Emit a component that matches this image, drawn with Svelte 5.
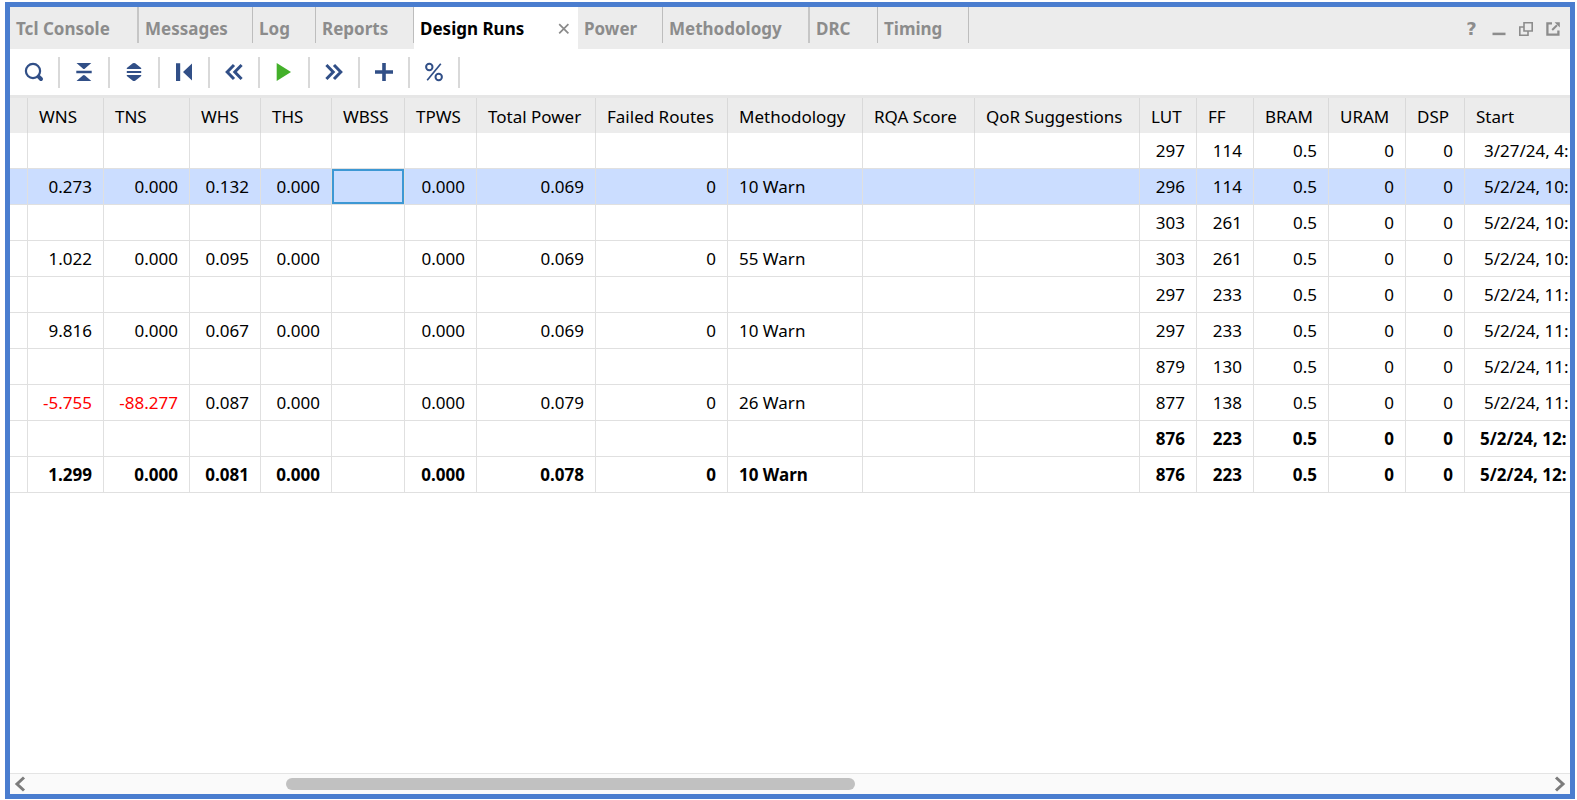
<script>
  const tabs = [
    { name: 'Tcl Console', width: 129, divider: 'wide' },
    { name: 'Messages', width: 114, divider: 'thin' },
    { name: 'Log', width: 63, divider: 'thin' },
    { name: 'Reports', width: 98, divider: 'thin' },
    { name: 'Design Runs', width: 164, active: true },
    { name: 'Power', width: 85, divider: 'thin' },
    { name: 'Methodology', width: 147, divider: 'wide' },
    { name: 'DRC', width: 68, divider: 'thin' },
    { name: 'Timing', width: 91, divider: 'thin' }
  ];

  const tools = ['search', 'collapse', 'expand', 'first', 'back', 'run', 'forward', 'add', 'percent'];

  const columns = [
    { name: '', width: 18 },
    { name: 'WNS', width: 76 },
    { name: 'TNS', width: 86 },
    { name: 'WHS', width: 71 },
    { name: 'THS', width: 71 },
    { name: 'WBSS', width: 73 },
    { name: 'TPWS', width: 72 },
    { name: 'Total Power', width: 119 },
    { name: 'Failed Routes', width: 132 },
    { name: 'Methodology', width: 135 },
    { name: 'RQA Score', width: 112 },
    { name: 'QoR Suggestions', width: 165 },
    { name: 'LUT', width: 57 },
    { name: 'FF', width: 57 },
    { name: 'BRAM', width: 75 },
    { name: 'URAM', width: 77 },
    { name: 'DSP', width: 59 },
    { name: 'Start' }
  ];

  const METHODOLOGY = 9;
  const START = 17;

  const none = ['', '', '', '', '', '', '', '', ''];
  const row = (timing, lut, ff, start, bold = false, selected = false) => ({
    cells: ['', ...timing, '', '', lut, ff, '0.5', '0', '0', start],
    bold,
    selected
  });

  const rows = [
    row(none, '297', '114', '3/27/24, 4:'),
    row(['0.273', '0.000', '0.132', '0.000', '', '0.000', '0.069', '0', '10 Warn'], '296', '114', '5/2/24, 10:', false, true),
    row(none, '303', '261', '5/2/24, 10:'),
    row(['1.022', '0.000', '0.095', '0.000', '', '0.000', '0.069', '0', '55 Warn'], '303', '261', '5/2/24, 10:'),
    row(none, '297', '233', '5/2/24, 11:'),
    row(['9.816', '0.000', '0.067', '0.000', '', '0.000', '0.069', '0', '10 Warn'], '297', '233', '5/2/24, 11:'),
    row(none, '879', '130', '5/2/24, 11:'),
    row(['-5.755', '-88.277', '0.087', '0.000', '', '0.000', '0.079', '0', '26 Warn'], '877', '138', '5/2/24, 11:'),
    row(none, '876', '223', '5/2/24, 12:', true),
    row(['1.299', '0.000', '0.081', '0.000', '', '0.000', '0.078', '0', '10 Warn'], '876', '223', '5/2/24, 12:', true)
  ];

  let focus = $state({ row: 1, column: 5 });
</script>

<div class="page">
  <main class="panel">
    <header class="tabbar">
      <nav class="tabs">
        {#each tabs as tab}
          <div class="tab {tab.divider ?? ''}" class:active={tab.active} style:width="{tab.width}px">
            <button class="label">{tab.name}</button>
            {#if tab.active}
              <button class="close" aria-label="Close tab">
                <svg width="12" height="12" viewBox="0 0 12 12"><path d="M1.2 1.2 10.4 10.4M10.4 1.2 1.2 10.4" fill="none" stroke="#8a8a8a" stroke-width="1.7" /></svg>
              </button>
            {/if}
          </div>
        {/each}
      </nav>
      <div class="window-controls">
        <button class="help">?</button>
        <button aria-label="Minimize">
          <svg width="14" height="14" viewBox="0 0 14 14"><path d="M.5 11.9h13" stroke="#8c8c8c" stroke-width="2.5" /></svg>
        </button>
        <button aria-label="Restore">
          <svg width="14" height="14" viewBox="0 0 14 14" fill="#ececec" stroke="#8c8c8c" stroke-width="1.6"><path d="M.8 5h8.200v8.200H.8z" /><path d="M5 .8h8.200v8.200H5z" /></svg>
        </button>
        <button aria-label="Float">
          <svg width="14" height="14" viewBox="0 0 14 14"><path d="M6 1.400H1.400v11.200h11V8.500" fill="none" stroke="#8c8c8c" stroke-width="2.300" /><path d="M6.200 8 11 3.200" stroke="#8c8c8c" stroke-width="2" /><path d="M8.600 .2h5.200v5.200z" fill="#8c8c8c" /></svg>
        </button>
      </div>
    </header>

    <div class="toolbar" role="toolbar" aria-label="Design runs">
      {#each tools as tool}
        <button class="tool" aria-label={tool}>
          <svg width="20" height="20" viewBox="0 0 20 20" fill="#314f87">
            {#if tool === 'search'}
              <circle cx="9" cy="9" r="7.100" fill="none" stroke="#314f87" stroke-width="2.200" />
              <path d="M14.6 14.6 17 17" stroke="#314f87" stroke-width="4" stroke-linecap="round" />
            {:else if tool === 'collapse'}
              <path d="M2.500 1h14.800L11 6.500q-1.100 1-2.200 0zM2.300 8.800h15.400v2.500H2.300zM2.500 19h14.800L11 13.500q-1.100-1-2.200 0z" />
            {:else if tool === 'expand'}
              <path d="M2.800 7V6l6-4.700q1.200-.8 2.400 0l6 4.700v1zM2.800 8.900h14.400v2.200H2.800zM2.800 13v1l6 4.700q1.200.8 2.400 0l6-4.700v-1z" />
            {:else if tool === 'first'}
              <path d="M2 1.2h4.2V19H2zM18 1.5V18.500L9 10z" />
            {:else if tool === 'back'}
              <path d="M10 3 3.200 10 10 17M17.600 3 10.800 10 17.600 17" fill="none" stroke="#314f87" stroke-width="3" />
            {:else if tool === 'run'}
              <path d="M2.700 1V19L17 10z" fill="#43b02a" />
            {:else if tool === 'forward'}
              <path d="M2.400 3 9.200 10 2.400 17M10 3 16.800 10 10 17" fill="none" stroke="#314f87" stroke-width="3" />
            {:else if tool === 'add'}
              <path d="M8.200 1h3.600v7.200H19v3.600h-7.200V19H8.200v-7.200H1V8.200h7.200z" />
            {:else}
              <g fill="none" stroke="#314f87" stroke-width="2"><circle cx="5.300" cy="5" r="3.200" /><circle cx="14.700" cy="15" r="3.200" /><path d="M16.800 1.800 3.200 18.200" stroke-width="1.700" /></g>
            {/if}
          </svg>
        </button>
      {/each}
    </div>

    <div class="grid">
      <table>
        <colgroup>
          {#each columns as column}
            <col style:width={column.width ? `${column.width}px` : 'auto'} />
          {/each}
        </colgroup>
        <thead>
          <tr>
            {#each columns as column}
              <th scope="col">{column.name}</th>
            {/each}
          </tr>
        </thead>
        <tbody>
          {#each rows as line, r}
            <tr class:bold={line.bold} class:selected={line.selected}>
              {#each line.cells as cell, c}
                <td
                  class:text={c === METHODOLOGY}
                  class:start={c === START}
                  class:negative={cell.startsWith('-')}
                  class:focused={focus.row === r && focus.column === c}>{cell}</td>
              {/each}
            </tr>
          {/each}
        </tbody>
      </table>
    </div>

    <div class="scrollbar">
      <button aria-label="Scroll left">
        <svg width="12" height="16" viewBox="0 0 12 16"><path d="M10 1.500 3 8 10 14.500" fill="none" stroke="#7c7c7c" stroke-width="3" /></svg>
      </button>
      <div class="track"><div class="thumb"></div></div>
      <button aria-label="Scroll right">
        <svg width="12" height="16" viewBox="0 0 12 16"><path d="M2 1.500 9 8 2 14.500" fill="none" stroke="#7c7c7c" stroke-width="3" /></svg>
      </button>
    </div>
  </main>
</div>

<style>
  :global(body) {
    margin: 0;
    background: #fff;
  }

  .page {
    box-sizing: border-box;
    height: 100vh;
    padding: 2px 2px 1px 5px;
    font-family: 'Noto Sans', 'Open Sans', sans-serif;
    font-size: 17px;
    line-height: 24px;
    color: #000;
  }

  .panel {
    box-sizing: border-box;
    height: 100%;
    display: flex;
    flex-direction: column;
    border: 5px solid #4a7dcf;
    background: #fff;
    overflow: hidden;
  }

  button {
    display: flex;
    align-items: center;
    justify-content: center;
    padding: 0;
    border: 0;
    background: none;
    font: inherit;
    color: inherit;
  }

  svg {
    display: block;
  }

  .tabbar {
    display: flex;
    justify-content: space-between;
    height: 42px;
    flex: none;
    background: #ececec;
  }

  .tabs {
    display: flex;
  }

  .tab {
    box-sizing: border-box;
    display: flex;
    align-items: center;
    justify-content: space-between;
    height: 36px;
    padding: 8px 7px 0 6px;
    color: #8c8c8c;
    font-weight: 700;
    white-space: nowrap;
  }

  .tab.thin {
    border-right: 1px solid #bdbdbd;
  }

  .tab.wide {
    border-right: 2px solid #c6c6c6;
  }

  .tab.active {
    height: 42px;
    padding-right: 8px;
    padding-bottom: 6px;
    background: #fff;
    color: #000;
  }

  .window-controls {
    display: flex;
    align-items: center;
    padding: 2px 4px 0 0;
  }

  .window-controls button {
    width: 27px;
    height: 24px;
    color: #8c8c8c;
  }

  .window-controls .help {
    font-family: 'DejaVu Sans', sans-serif;
    font-size: 18px;
    font-weight: 700;
  }

  .toolbar {
    display: flex;
    align-items: center;
    height: 46px;
    flex: none;
  }

  .tool {
    box-sizing: border-box;
    width: 50px;
    height: 31px;
    border-right: 2px solid #d9d9d9;
  }

  .grid {
    flex: 1;
    min-height: 0;
    overflow: hidden;
    border-top: 3px solid #e6e6e6;
  }

  table {
    width: 100%;
    table-layout: fixed;
    border-collapse: separate;
    border-spacing: 0;
  }

  th,
  td {
    box-sizing: border-box;
    padding: 0 11px;
    overflow: hidden;
    white-space: nowrap;
    border-right: 1px solid #e0e0e0;
  }

  th:last-child,
  td:last-child {
    border-right: 0;
    padding-right: 0;
  }

  th {
    height: 35px;
    padding-top: 2px;
    background: #ececec;
    border-right-color: #d9d9d9;
    font-weight: 400;
    text-align: left;
  }

  td {
    height: 36px;
    border-bottom: 1px solid #e0e0e0;
    text-align: right;
  }

  th:first-child,
  td:first-child {
    padding: 0;
  }

  td.text {
    text-align: left;
  }

  td.start {
    padding-left: 19px;
    text-align: left;
  }

  td.negative {
    color: #f00;
  }

  .bold td {
    font-weight: 700;
  }

  .bold td.start {
    padding-left: 15px;
  }

  .selected td {
    background: #cbddff;
  }

  td.focused {
    box-shadow: inset 0 0 0 2px #3d98d4;
  }

  .scrollbar {
    display: flex;
    align-items: center;
    height: 20px;
    flex: none;
    border-top: 1px solid #e4e4e4;
    background: #fafafa;
  }

  .scrollbar button {
    width: 20px;
    height: 20px;
  }

  .track {
    flex: 1;
  }

  .thumb {
    width: 37.4%;
    height: 12px;
    margin-left: 16.85%;
    border-radius: 6px;
    background: #c1c1c1;
  }
</style>
